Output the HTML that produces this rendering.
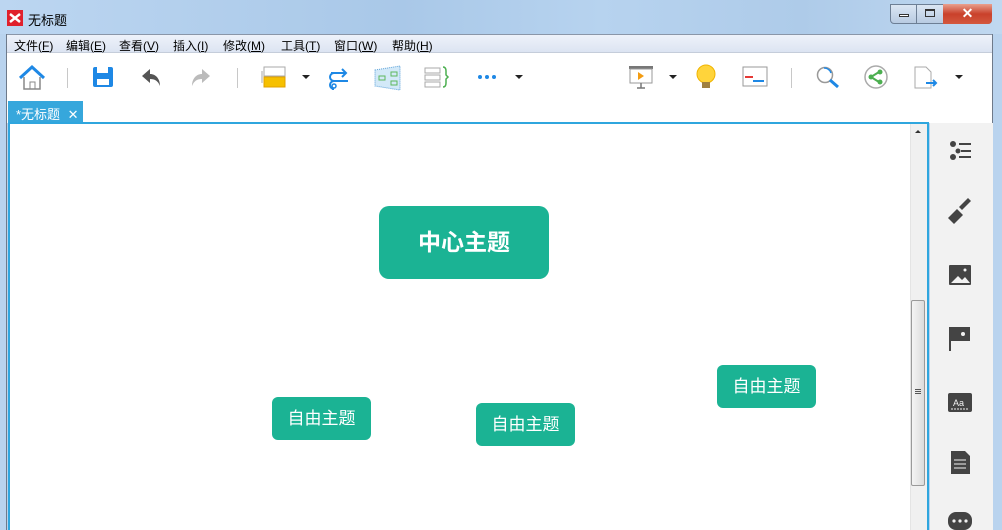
<!DOCTYPE html>
<html><head><meta charset="utf-8"><style>
*{margin:0;padding:0;box-sizing:border-box}
body{width:1002px;height:530px;overflow:hidden;position:relative;font-family:"Liberation Sans","Noto Sans CJK SC",sans-serif;background:#b9d3ee}
.a{position:absolute}
#title{left:0;top:0;width:1002px;height:34px;background:linear-gradient(90deg,#bcd6f1 0%,#a9c8e8 40%,#b7d3ef 60%,#aecbe9 80%,#c0d8f0 100%)}
#menu{left:6px;top:34px;width:987px;height:19px;background:linear-gradient(#eef2fa,#dce4f2);border-top:1px solid #8a96a8;border-bottom:1px solid #c5cdda;font-size:12px;color:#000}
#menu span{position:absolute;top:2px}
#tb{left:6px;top:53px;width:987px;height:48px;background:#fff}
#tabrow{left:6px;top:101px;width:987px;height:22px;background:#fff}
#tab{left:8px;top:101px;width:75px;height:22px;background:#36a7dc;color:#fff;font-size:13px;padding:3px 0 0 8px}
#canvas{left:8px;top:122px;width:921px;height:408px;border:2px solid #2fa6de;border-bottom:none;background:#fff}
#sb{left:910px;top:124px;width:17px;height:406px;background:#f0f0f0;border-left:1px solid #e4e4e4}
#thumb{left:911px;top:300px;width:14px;height:186px;background:linear-gradient(90deg,#f4f4f4,#dcdcdc);border:1px solid #9a9a9a;border-radius:2px}
#panel{left:930px;top:123px;width:63px;height:407px;background:#f2f2f2}
.node{position:absolute;background:#1bb394;color:#fff;border-radius:6px;font-size:17px;text-align:center}
.sep{position:absolute;width:1px;height:20px;background:#c8c8c8;top:68px}
.caret{position:absolute;width:0;height:0;border-left:4px solid transparent;border-right:4px solid transparent;border-top:4px solid #222;top:75px}
</style></head><body>
<div id="title" class="a">
 <div class="a" style="left:7px;top:10px;width:16px;height:16px;background:#e0202c"><svg width="16" height="16"><path d="M3 4l5 4l5-4M3 12l5-4l5 4" stroke="#fff" stroke-width="2.5" fill="none"/></svg></div>
 <div class="a" style="left:28px;top:10px;font-size:13px;color:#000">无标题</div>
 <div class="a" style="left:890px;top:4px;width:102px;height:20px;border:1px solid #6d7f95;border-radius:0 0 4px 4px;background:linear-gradient(#dbe6f3,#b8cbe2)"></div>
 <div class="a" style="left:916px;top:4px;width:1px;height:20px;background:#6d7f95"></div>
 <div class="a" style="left:943px;top:4px;width:49px;height:20px;background:linear-gradient(#e9a08e,#c9412b 50%,#d3583e);border-radius:0 0 4px 0;color:#fff;font-weight:bold;font-size:14px;text-align:center;line-height:18px">✕</div>
 <div class="a" style="left:899px;top:14px;width:10px;height:3px;border:1px solid #333;background:#fff"></div>
 <div class="a" style="left:925px;top:9px;width:10px;height:8px;border:1px solid #333;border-top-width:2px"></div>
</div>
<div id="menu" class="a">
 <span style="left:8px">文件(<u>F</u>)</span><span style="left:60px">编辑(<u>E</u>)</span><span style="left:113px">查看(<u>V</u>)</span><span style="left:167px">插入(<u>I</u>)</span><span style="left:217px">修改(<u>M</u>)</span><span style="left:275px">工具(<u>T</u>)</span><span style="left:328px">窗口(<u>W</u>)</span><span style="left:386px">帮助(<u>H</u>)</span>
</div>
<div id="tb" class="a"></div>
<svg class="a" style="left:0;top:53px" width="1002" height="48">
 <path d="M20 25l12-11l12 11" stroke="#1e88e5" stroke-width="3" fill="none"/>
 <path d="M24 24v12h16v-12" stroke="#888" stroke-width="1.5" fill="none"/><rect x="30" y="29" width="5" height="7" fill="none" stroke="#888"/>
 <rect x="93" y="14" width="20" height="20" rx="2" fill="#1e88e5"/><rect x="97" y="14" width="11" height="6" fill="#fff"/><rect x="97" y="26" width="12" height="6" fill="#fff"/>
 <path d="M150 16l-8 7l8 7v-4c5 0 8 2 10 7c0-7-4-12-10-12z" fill="#555"/>
 <path d="M202 16l8 7l-8 7v-4c-5 0-8 2-10 7c0-7 4-12 10-12z" fill="#bbb"/>
 <rect x="264" y="14" width="21" height="9" fill="#fff" stroke="#aaa"/><rect x="264" y="24" width="21" height="10" fill="#f6c000" stroke="#e0a000"/><path d="M262 18v12" stroke="#aaa"/>
 <path d="M331 20h14m-3-4l4 4l-4 4M348 28h-14a4 4 0 0 1 0-8M334 28a4 4 0 0 0 0 8h-2" stroke="#1e88e5" stroke-width="2" fill="none"/><circle cx="334" cy="33" r="2" fill="none" stroke="#1e88e5" stroke-width="1.5"/>
 <path d="M375 17l25-4v24l-25-4z" fill="#d3e9f8" stroke="#5aa0d8" stroke-dasharray="1 1"/><rect x="379" y="23" width="6" height="4" fill="none" stroke="#5cb85c"/><rect x="391" y="19" width="6" height="4" fill="none" stroke="#5cb85c"/><rect x="391" y="28" width="6" height="4" fill="none" stroke="#5cb85c"/>
 <rect x="425" y="15" width="15" height="5" fill="none" stroke="#aaa"/><rect x="425" y="22" width="15" height="5" fill="none" stroke="#aaa"/><rect x="425" y="29" width="15" height="5" fill="none" stroke="#aaa"/><path d="M443 14q3 0 3 4v4l2 2l-2 2v4q0 4-3 4" stroke="#4caf50" stroke-width="1.5" fill="none"/>
 <circle cx="480" cy="24" r="2" fill="#1e88e5"/><circle cx="487" cy="24" r="2" fill="#1e88e5"/><circle cx="494" cy="24" r="2" fill="#1e88e5"/>
 <rect x="629" y="13" width="24" height="3" fill="#777"/><rect x="630" y="16" width="22" height="14" fill="#fff" stroke="#999"/><path d="M638 19l6 4l-6 4z" fill="#f39c12"/><path d="M641 30v5m-4 0h8" stroke="#777" stroke-width="1.5"/>
 <circle cx="706" cy="21" r="9" fill="#ffd43b" stroke="#f0b400"/><rect x="702" y="29" width="8" height="6" fill="#a08040"/>
 <rect x="743" y="14" width="24" height="19" fill="#fff" stroke="#999"/><path d="M745 24h8" stroke="#e53935" stroke-width="2"/><path d="M753 28h11" stroke="#1e88e5" stroke-width="2"/>
 <circle cx="825" cy="22" r="7.5" fill="#fff" stroke="#999" stroke-width="1.5"/><path d="M824 15a7 7 0 0 1 7 5" stroke="#1e88e5" stroke-width="1.5" fill="none"/><path d="M830 27l8 7" stroke="#1e88e5" stroke-width="3"/>
 <circle cx="876" cy="24" r="11" fill="#fff" stroke="#aaa" stroke-width="1.5"/><path d="M871 24l8-5m-8 5l8 5" stroke="#4caf50" stroke-width="2"/><circle cx="871" cy="24" r="2.5" fill="#4caf50"/><circle cx="880" cy="19" r="2.5" fill="#4caf50"/><circle cx="880" cy="29" r="2.5" fill="#4caf50"/>
 <path d="M915 14h11l5 5v16h-16z" fill="#fff" stroke="#aaa"/><path d="M926 30h10m-3-3l3 3l-3 3" stroke="#1e88e5" stroke-width="2" fill="none"/>
</svg>
<div class="sep" style="left:67px"></div><div class="sep" style="left:237px"></div><div class="sep" style="left:791px"></div>
<div class="caret" style="left:302px"></div><div class="caret" style="left:515px"></div><div class="caret" style="left:669px"></div><div class="caret" style="left:955px"></div>
<div id="tabrow" class="a"></div>
<div class="a" style="left:6px;top:34px;width:1px;height:496px;background:#6e7a8a"></div>
<div class="a" style="left:992px;top:34px;width:1px;height:496px;background:#6e7a8a"></div>
<div id="tab" class="a">*无标题 <span style="margin-left:4px">✕</span></div>
<div id="canvas" class="a"></div>
<div id="sb" class="a"><div style="position:absolute;left:4px;top:6px;border-left:3px solid transparent;border-right:3px solid transparent;border-bottom:3px solid #333"></div></div>
<div id="thumb" class="a"><div style="position:absolute;left:3px;top:88px;width:6px;height:5px;border-top:1px solid #555;border-bottom:1px solid #555"></div><div style="position:absolute;left:3px;top:90px;width:6px;height:1px;background:#555"></div></div>
<div id="panel" class="a"></div>
<svg class="a" style="left:930px;top:123px" width="63" height="407" fill="#444">
 <circle cx="23" cy="21" r="3"/><circle cx="28" cy="28" r="2.5"/><circle cx="23" cy="34" r="3"/><rect x="29" y="20" width="12" height="2"/><rect x="31" y="27" width="10" height="2"/><rect x="29" y="33" width="12" height="2"/>
 <path d="M18 95l9-9l6 6l-9 9z"/><path d="M29 84l9-9l3 3l-9 9z"/>
 <rect x="19" y="142" width="22" height="20" rx="1"/><path d="M21 160l7-7l4 4l3-3l5 6z" fill="#f2f2f2"/><circle cx="35" cy="147" r="1.5" fill="#f2f2f2"/>
 <rect x="19" y="204" width="2" height="24"/><path d="M21 204h19v14h-19z"/><circle cx="33" cy="211" r="2" fill="#f2f2f2"/>
 <rect x="18" y="270" width="24" height="19" rx="2"/><text x="23" y="283" font-size="9" fill="#f2f2f2" font-family="Liberation Sans">Aa</text><path d="M21 286h18" stroke="#f2f2f2" stroke-dasharray="2 1"/>
 <path d="M21 328h14l5 5v18h-19z"/><path d="M24 337h12M24 341h12M24 345h12" stroke="#f2f2f2"/>
 <rect x="18" y="389" width="24" height="18" rx="8"/><circle cx="24" cy="398" r="1.6" fill="#f2f2f2"/><circle cx="30" cy="398" r="1.6" fill="#f2f2f2"/><circle cx="36" cy="398" r="1.6" fill="#f2f2f2"/>
</svg>
<div class="node" style="left:379px;top:206px;width:170px;height:73px;border-radius:10px;font-size:23px;font-weight:bold;line-height:73px">中心主题</div>
<div class="node" style="left:272px;top:397px;width:99px;height:43px;line-height:43px">自由主题</div>
<div class="node" style="left:476px;top:403px;width:99px;height:43px;line-height:43px">自由主题</div>
<div class="node" style="left:717px;top:365px;width:99px;height:43px;line-height:43px">自由主题</div>
</body></html>
